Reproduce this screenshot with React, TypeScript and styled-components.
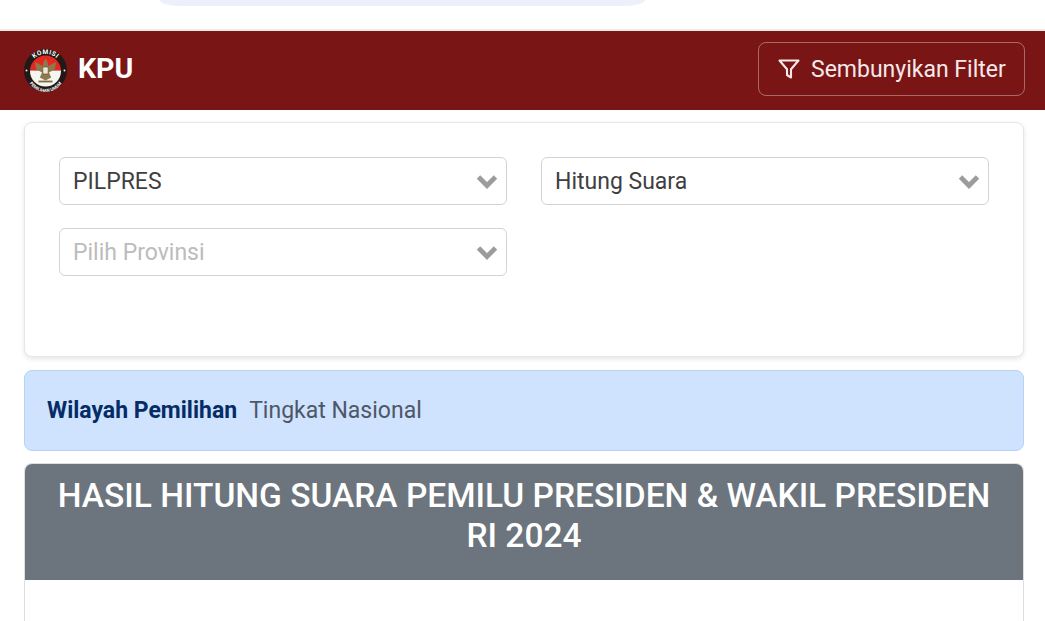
import React from "react";
import styled, { createGlobalStyle } from "styled-components";

const Global = createGlobalStyle`
  html, body { margin: 0; padding: 0; background: #fff; overflow: hidden; }
  body { font-family: Roboto, "Liberation Sans", sans-serif; }
  * { box-sizing: border-box; }
`;

const Page = styled.div`
  width: 1045px;
  height: 621px;
  overflow: hidden;
  background: #fff;
`;

const TopStrip = styled.div`
  height: 31px;
  padding-left: 160px;
  border-bottom: 2px solid #ece8e4;
`;

const SearchPill = styled.div`
  width: 485px;
  height: 6px;
  background: #ebf0fa;
  border-radius: 0 0 21px 21px / 0 0 6px 6px;
`;

const Header = styled.header`
  height: 79px;
  background: #7a1515;
  display: flex;
  align-items: center;
  justify-content: space-between;
  padding: 0 20px 0 23px;
`;

const Brand = styled.div`
  display: flex;
  align-items: center;
  gap: 10px;
`;

const BrandName = styled.span`
  color: #fff;
  font-size: 28.5px;
  font-weight: 700;
  position: relative;
  top: -2px;
`;

const FilterButton = styled.button`
  width: 267px;
  height: 54px;
  margin-top: -3px;
  display: flex;
  align-items: center;
  gap: 10px;
  padding: 0 0 0 18px;
  background: transparent;
  border: 1px solid rgba(255, 255, 255, 0.36);
  border-radius: 8px;
  color: #f6e9e9;
  font-family: inherit;
  font-size: 23px;
  font-weight: 400;
`;

const Content = styled.main`
  padding: 12px 21px 0 24px;
  display: flex;
  flex-direction: column;
  gap: 13px;
`;

const FilterCard = styled.section`
  height: 235px;
  background: #fff;
  border: 1px solid #e6e6e6;
  border-radius: 8px;
  box-shadow: 0 2px 5px rgba(0, 0, 0, 0.1);
  padding: 34px 34px 0;
  display: grid;
  grid-template-columns: 448px 448px;
  grid-auto-rows: 48px;
  column-gap: 34px;
  row-gap: 23px;
`;

const Select = styled.div<{ $placeholder?: boolean }>`
  height: 48px;
  display: flex;
  align-items: center;
  justify-content: space-between;
  padding: 0 7px 0 13px;
  border: 1px solid #d3d3d3;
  border-radius: 6px;
  background: #fff;
  color: ${(p) => (p.$placeholder ? "#bcbcbc" : "#3f3f3f")};
  font-size: 23px;
`;

const Alert = styled.section`
  height: 81px;
  display: flex;
  align-items: center;
  gap: 12px;
  padding: 0 0 0 22px;
  background: #cfe2fe;
  border: 1px solid #b6d2f4;
  border-radius: 8px;
`;

const AlertLabel = styled.strong`
  color: #052c65;
  font-size: 23px;
  font-weight: 700;
`;

const AlertValue = styled.span`
  color: #4d5766;
  font-size: 23px;
`;

const ResultCard = styled.section`
  margin-top: -1px;
  border: 1px solid #dedede;
  border-bottom: none;
  border-radius: 8px 8px 0 0;
  height: 200px;
  overflow: hidden;
`;

const ResultTitle = styled.h1`
  margin: 0;
  height: 116px;
  padding: 12px 20px 0;
  background: #6c757d;
  color: #fff;
  text-align: center;
  font-size: 33.5px;
  line-height: 40px;
  font-weight: 500;
`;

const Chevron = () => (
  <svg width="24" height="24" viewBox="0 0 24 24" fill="none">
    <path d="M3.500 8l8.500 8.500L20.500 8" stroke="#9c9c9c" strokeWidth="4.800" />
  </svg>
);

const FilterIcon = () => (
  <svg width="24" height="24" viewBox="0 0 24 24" fill="none" stroke="#f6e9e9" strokeWidth="2.100" strokeLinejoin="round" strokeLinecap="round">
    <path d="M2.500 3.500h19l-7.500 8.800v8.200l-4-2.500v-5.700z" />
  </svg>
);

const Logo = () => (
  <svg width="45" height="45" viewBox="0 0 45 45">
    <defs>
      <path id="arcTop" d="M6 22.500a16.500 16.500 0 0 1 33 0" />
      <path id="arcBottom" d="M3.500 25a19 19 0 0 0 38 0" />
      <clipPath id="inner"><circle cx="22.500" cy="23" r="15.500" /></clipPath>
    </defs>
    <circle cx="22.500" cy="22.500" r="21.500" fill="#211817" />
    <g clipPath="url(#inner)">
      <rect x="6" y="6" width="33" height="16.500" fill="#e2281f" />
      <rect x="6" y="22.500" width="33" height="17" fill="#f7f5f0" />
    </g>
    <path d="M22.500 10.500l2 3.500.8 4 7.700-4-1 7-6 3.500 2.200 5-5.700 3-5.700-3 2.200-5-6-3.500-1-7 7.700 4 .8-4z" fill="#8d7a4c" />
    <rect x="19.800" y="19" width="5.400" height="7" rx="1" fill="#eee6d6" stroke="#5a4a2c" strokeWidth=".6" />
    <path d="M15.500 33.500h14" stroke="#7c6a40" strokeWidth="1.800" />
    <circle cx="3.500" cy="22.500" r="1" fill="#f4efe6" />
    <circle cx="41.500" cy="22.500" r="1" fill="#f4efe6" />
    <text fontFamily="Roboto, sans-serif" fontSize="6.500" fontWeight="700" fill="#fff" letterSpacing=".5">
      <textPath href="#arcTop" startOffset="50%" textAnchor="middle">KOMISI</textPath>
    </text>
    <text fontFamily="Roboto, sans-serif" fontSize="4.400" fontWeight="700" fill="#fff">
      <textPath href="#arcBottom" startOffset="50%" textAnchor="middle">PEMILIHAN UMUM</textPath>
    </text>
  </svg>
);

export default function App() {
  return (
    <Page>
      <Global />
      <TopStrip>
        <SearchPill />
      </TopStrip>
      <Header>
        <Brand>
          <Logo />
          <BrandName>KPU</BrandName>
        </Brand>
        <FilterButton>
          <FilterIcon />
          Sembunyikan Filter
        </FilterButton>
      </Header>
      <Content>
        <FilterCard>
          <Select>
            PILPRES
            <Chevron />
          </Select>
          <Select>
            Hitung Suara
            <Chevron />
          </Select>
          <Select $placeholder>
            Pilih Provinsi
            <Chevron />
          </Select>
        </FilterCard>
        <Alert>
          <AlertLabel>Wilayah Pemilihan</AlertLabel>
          <AlertValue>Tingkat Nasional</AlertValue>
        </Alert>
        <ResultCard>
          <ResultTitle>HASIL HITUNG SUARA PEMILU PRESIDEN &amp; WAKIL PRESIDEN RI 2024</ResultTitle>
        </ResultCard>
      </Content>
    </Page>
  );
}
